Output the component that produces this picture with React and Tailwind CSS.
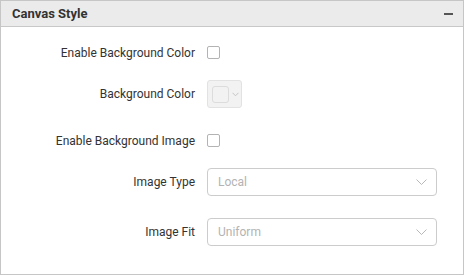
import React from "react";

function Checkbox() {
  return <div className="w-[13px] h-[13px] border border-[#b3b3b3] rounded-[2px] bg-white" />;
}

function ColorPicker() {
  return (
    <div className="w-[35px] h-[28px] rounded-[3px] border border-[#e2e2e2] bg-[#f2f2f2] flex items-center pl-[4px]">
      <div className="w-[17px] h-[17px] rounded-[3px] border border-[#dcdcdc] bg-[#f2f2f2]" />
      <svg width="7" height="5" viewBox="0 0 7 5" className="ml-[3px]">
        <path d="M0.5 0.8 L3.5 3.8 L6.5 0.8" fill="none" stroke="#c4c4c4" strokeWidth="1" />
      </svg>
    </div>
  );
}

function Dropdown({ value }) {
  return (
    <div className="w-[230px] h-[28px] rounded-[4px] border border-[#cccccc] bg-white flex items-center justify-between pl-[10px] pr-[9px]">
      <span className="text-[12px] text-[#b3b3b3]">{value}</span>
      <svg width="11" height="6" viewBox="0 0 11 6">
        <path d="M0.5 0.5 L5.5 5.5 L10.5 0.5" fill="none" stroke="#b8b8b8" strokeWidth="1" />
      </svg>
    </div>
  );
}

function Row({ label, children, className }) {
  return (
    <div className={"flex items-center " + className}>
      <div className="w-[194px] text-right text-[12px] text-[#333333] leading-none">{label}</div>
      <div className="ml-[12px]">{children}</div>
    </div>
  );
}

export default function App() {
  return (
    <div
      className="w-[464px] h-[275px] border border-[#c6c6c6] bg-white flex flex-col"
      style={{ fontFamily: "Roboto, 'Liberation Sans', sans-serif" }}
    >
      <div className="h-[26px] bg-[#ebebeb] border-b border-[#c8c8c8] flex items-center justify-between pl-[11px] pr-[10px]">
        <span className="text-[13px] font-bold text-[#333333]">Canvas Style</span>
        <div className="w-[9px] h-[2px] bg-[#555555]" />
      </div>
      <Row label="Enable Background Color" className="h-[13px] mt-[19px]">
        <Checkbox />
      </Row>
      <Row label="Background Color" className="h-[28px] mt-[21px]">
        <ColorPicker />
      </Row>
      <Row label="Enable Background Image" className="h-[13px] mt-[26px]">
        <Checkbox />
      </Row>
      <Row label="Image Type" className="h-[28px] mt-[21px]">
        <Dropdown value="Local" />
      </Row>
      <Row label="Image Fit" className="h-[28px] mt-[22px]">
        <Dropdown value="Uniform" />
      </Row>
    </div>
  );
}
